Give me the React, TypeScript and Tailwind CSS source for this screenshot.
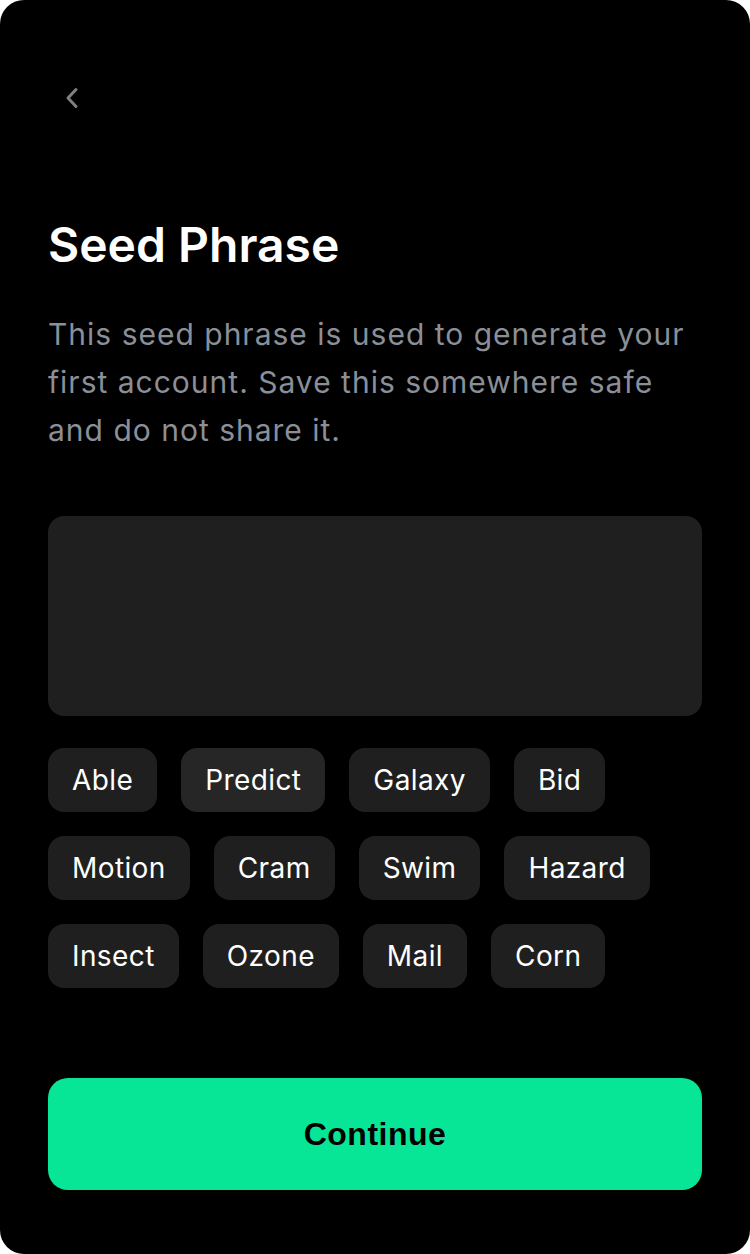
const words = [
  'Able',
  'Predict',
  'Galaxy',
  'Bid',
  'Motion',
  'Cram',
  'Swim',
  'Hazard',
  'Insect',
  'Ozone',
  'Mail',
  'Corn',
];

function BackIcon() {
  return (
    <svg width="24" height="24" viewBox="0 0 24 24" fill="none" className="text-[#808080]">
      <path d="M16 3.5 L8 12 L16 20.5" stroke="currentColor" strokeWidth="3" strokeLinecap="round" strokeLinejoin="round" />
    </svg>
  );
}

export default function App() {
  return (
    <div className="w-[750px] h-[1254px] bg-white" style={{ fontFamily: 'Inter, "Noto Sans", sans-serif' }}>
      <div className="w-full h-full bg-black rounded-[24px] px-12 flex flex-col">
        <button className="mt-[86px] ml-3 w-6 h-6 flex items-center justify-center" aria-label="Back">
          <BackIcon />
        </button>

        <h1 className="mt-[107px] text-white text-[48px] leading-[56px] font-semibold">
          Seed Phrase
        </h1>

        <p className="mt-[37px] text-[#8a8f98] text-[30px] leading-[48px] tracking-[1px]">
          This seed phrase is used to generate your first account. Save this somewhere safe and do not share it.
        </p>

        <div className="mt-[62px] h-[200px] rounded-2xl bg-[#1f1f1f]" />

        <div className="mt-8 flex flex-wrap gap-6">
          {words.map((word) => (
            <div
              key={word}
              className={`h-16 px-6 rounded-2xl flex items-center text-white text-[28px] tracking-[0.4px] ${
                word === 'Predict' ? 'bg-[#262626]' : 'bg-[#1f1f1f]'
              }`}
            >
              {word}
            </div>
          ))}
        </div>

        <button
          className="mt-[90px] h-28 w-full rounded-[20px] bg-[#07e697] text-black text-[32px] font-bold tracking-[0.5px]"
          style={{ fontFamily: '"Liberation Sans", Arial, sans-serif' }}
        >
          Continue
        </button>
      </div>
    </div>
  );
}
